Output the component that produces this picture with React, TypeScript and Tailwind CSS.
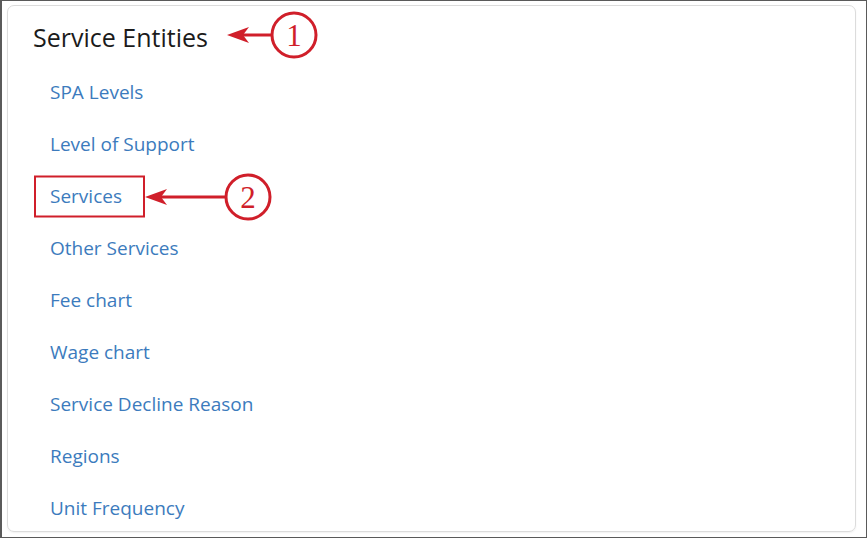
const links = [
  'SPA Levels',
  'Level of Support',
  'Services',
  'Other Services',
  'Fee chart',
  'Wage chart',
  'Service Decline Reason',
  'Regions',
  'Unit Frequency',
];

const RED = '#d01f2a';

// numbered callout: arrow pointing left to tipX, circle with number on the right
const Callout = ({ tipX, y, cx, n }: { tipX: number; y: number; cx: number; n: string }) => (
  <g>
    <line x1={tipX + 16} y1={y} x2={cx - 22} y2={y} stroke={RED} strokeWidth={3} />
    <polygon points={`${tipX},${y} ${tipX + 22},${y - 8} ${tipX + 16},${y} ${tipX + 22},${y + 8}`} fill={RED} />
    <circle cx={cx} cy={y} r={22} fill="white" stroke={RED} strokeWidth={3} />
    <text
      x={cx}
      y={y + 11}
      textAnchor="middle"
      fill={RED}
      fontSize={31}
      fontFamily="'Liberation Serif', 'DejaVu Serif', serif"
    >
      {n}
    </text>
  </g>
);

export default function App() {
  return (
    <div
      className="relative w-[867px] h-[538px] bg-white border border-[#5a5a5a] border-l-2 overflow-hidden"
      style={{ fontFamily: "'Open Sans', 'Noto Sans', sans-serif" }}
    >
      <div className="ml-[5px] mt-[4px] w-[849px] h-[527px] rounded-[7px] border border-[#dcdcdc] shadow-[0_1px_2px_rgba(0,0,0,0.06)] overflow-hidden">
        <h2 className="pl-[25px] pt-[14px] h-[52px] text-[25px] leading-[34px] text-[#1b1b1b]">Service Entities</h2>
        <ul className="mt-[14px] flex flex-col gap-[12px]">
          {links.map((l) => (
            <li key={l} className="h-[40px] flex items-center pl-[42px]">
              <a className="text-[19px] text-[#3c7bbd] cursor-pointer">{l}</a>
            </li>
          ))}
        </ul>
      </div>

      <svg className="absolute left-0 top-0 pointer-events-none" width={867} height={538}>
        <Callout tipX={225} y={34} cx={292} n="1" />
        <rect x={33} y={175.5} width={109} height={40} fill="none" stroke={RED} strokeWidth={2} />
        <Callout tipX={143} y={196} cx={246} n="2" />
      </svg>
    </div>
  );
}
